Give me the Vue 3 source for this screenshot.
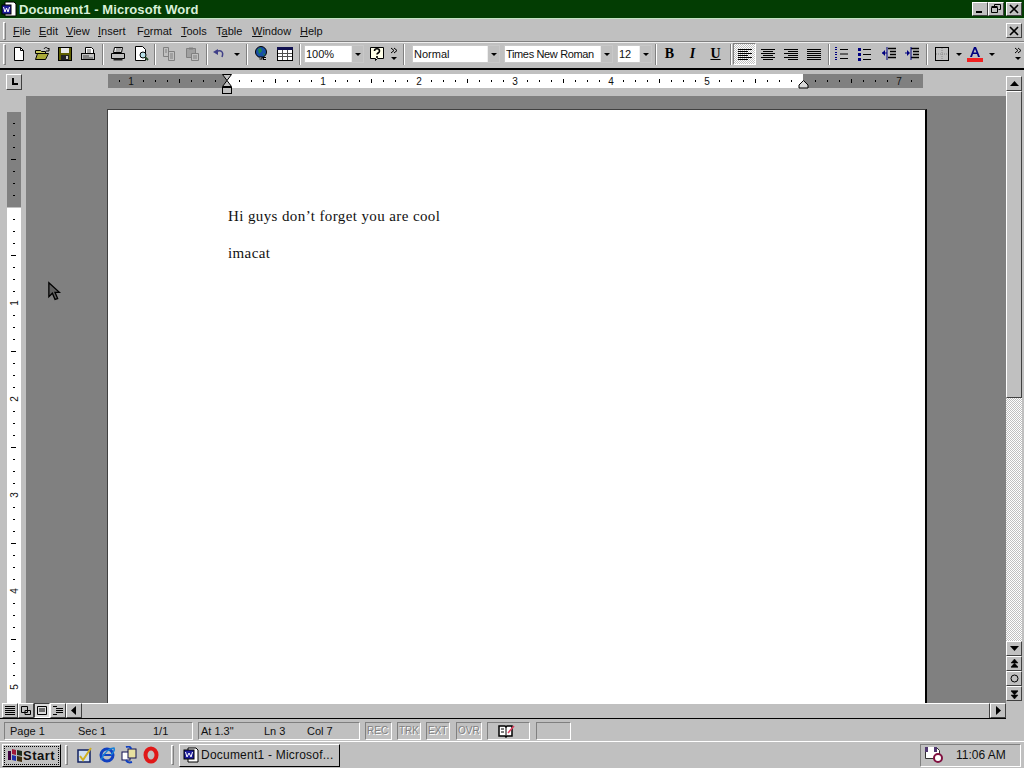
<template>
  <div class="screen">
    <!-- title bar -->
    <div class="titlebar">
      <svg class="title-icon" width="16" height="16" viewBox="0 0 16 16"><path d="M4 1h9l2 2v12H4z" fill="#fff" stroke="#000"/><rect x="1" y="4" width="9" height="9" fill="#1c1c9c" stroke="#000"/><path d="M2.500 6l1.500 5 1.500-4 1.500 4 1.500-5" fill="none" stroke="#fff"/></svg>
      <span class="title-text">Document1 - Microsoft Word</span>
      <div class="win-buttons">
        <button class="win-btn"><svg width="10" height="10"><rect x="1" y="7" width="6" height="2" fill="#000"/></svg></button>
        <button class="win-btn"><svg width="10" height="10" fill="none" stroke="#000"><path d="M3.500 2.500V.5h6v5H7.500M.5 3.500h6v5h-6zM.5 2.500h6"/></svg></button>
        <button class="win-btn gap"><svg width="10" height="10" stroke="#000" stroke-width="1.6"><path d="M1 1l8 8M9 1L1 9"/></svg></button>
      </div>
    </div>

    <!-- menu -->
    <div class="menubar">
      <span class="grip"></span>
      <nav class="menu">
        <span v-for="m in menus" :key="m.label" :style="{ width: m.w + 'px' }">{{ m.before }}<u>{{ m.key }}</u>{{ m.after }}</span>
      </nav>
      <button class="win-btn doc-close"><svg width="10" height="10" stroke="#000" stroke-width="1.6"><path d="M1 1l8 8M9 1L1 9"/></svg></button>
    </div>

    <!-- toolbar -->
    <div class="toolbar">
      <span class="grip small"></span>
      <div class="btn"><svg viewBox="0 0 16 16"><path d="M3.500 1.500h6l3 3v10h-9z" fill="#fff" stroke="#000"/><path d="M9.500 1.500v3h3" fill="none" stroke="#000"/></svg></div>
      <div class="btn"><svg viewBox="0 0 16 16"><path d="M1.500 4.500h5l1 1h4v2h-10z" fill="#c8c860" stroke="#000"/><path d="M1.500 13.500l2-6h11l-3 6z" fill="#a8a838" stroke="#000"/><path d="M10 3c1-2 3-2 4 0l1-1v3h-3" fill="none" stroke="#000"/></svg></div>
      <div class="btn"><svg viewBox="0 0 16 16"><rect x="1.500" y="1.500" width="13" height="13" fill="#606000" stroke="#000"/><rect x="4" y="2" width="8" height="5" fill="#e8e8e8"/><rect x="4" y="9" width="8" height="5" fill="#222"/><rect x="9" y="10" width="2" height="3" fill="#ccc"/></svg></div>
      <div class="btn"><svg viewBox="0 0 16 16"><path d="M5.500 1.500h6l2 2v6h-8z" fill="#fff" stroke="#000"/><rect x="1.500" y="7.500" width="13" height="6" fill="#c0c0c0" stroke="#000"/><path d="M3 10h6M3 12h10" stroke="#444"/><path d="M7 4h4M7 6h4" stroke="#555"/></svg></div>
      <span class="sep"></span>
      <div class="btn"><svg viewBox="0 0 16 16"><path d="M4.500 1.500h8l-1 5h-8z" fill="#fff" stroke="#000"/><path d="M1.500 7.500h13v5h-13z" fill="#c0c0c0" stroke="#000"/><path d="M3.500 12.500h9v2h-9z" fill="#222"/><path d="M6 3h5M5.500 5h5" stroke="#555"/></svg></div>
      <div class="btn"><svg viewBox="0 0 16 16"><path d="M2.500.5h7l3 3v11h-10z" fill="#fff" stroke="#000"/><circle cx="10" cy="9" r="3" fill="#b8e0e8" stroke="#000"/><path d="M12 11l3 3" stroke="#284828" stroke-width="2"/></svg></div>
      <span class="sep narrow"></span>
      <div class="btn off"><svg viewBox="0 0 16 16" fill="none" stroke="#808080"><path d="M2.500 1.500h5v9h-5zM7.500 5.500h6v9h-6z"/><path d="M4 4h2M4 6h2M9 8h3M9 10h3M9 12h3" /></svg></div>
      <div class="btn off"><svg viewBox="0 0 16 16"><path d="M2.500 2.500h9v9h-9z" fill="#a0a0a0" stroke="#808080"/><path d="M7.500 7.500h7v7h-7z" fill="#c0c0c0" stroke="#808080"/><path d="M5 1.500h4v2H5z" fill="#808080"/><path d="M9 10h4M9 12h4" stroke="#808080"/></svg></div>
      <span class="sep sixth"></span>
      <div class="btn undo"><svg viewBox="0 0 16 16" fill="none"><path d="M4 6c5-3 8 0 6 5" stroke="#404088" stroke-width="1.500"/><path d="M1 6l5-3v6z" fill="#404088"/></svg></div>
      <div class="drop"></div>
      <span class="sep"></span>
      <div class="btn"><svg viewBox="0 0 16 16"><circle cx="7" cy="6" r="5.500" fill="#1850a8" stroke="#000"/><path d="M4 3l3-1 1 3-3 3zM9 7l2 1-1 2z" fill="#208848"/><path d="M5.500 12h3M9 12.500h3" stroke="#000" stroke-width="3"/><path d="M5.500 12h2M10 12.500h2" stroke="#d8d8d8"/></svg></div>
      <div class="btn"><svg viewBox="0 0 16 16"><rect x=".5" y="1.500" width="15" height="13" fill="#fff" stroke="#000"/><rect x="0" y="1" width="16" height="3" fill="#101050"/><path d="M1 7.500h14M1 10.500h14M5.500 4v10M10.500 4v10" stroke="#505050"/></svg></div>
      <span class="sep"></span>
      <div class="combo" style="width:60px"><span>100%</span><i></i></div>
      <div class="btn help"><svg viewBox="0 0 16 16"><path d="M1.500 1.500h13v11h-6l-2 2v-2h-5z" fill="#ffffe8" stroke="#000"/><path d="M5.500 5c0-3 5-3 5 0 0 2-2.500 2-2.500 3.500M8 10v2" fill="none" stroke="#000" stroke-width="1.600"/></svg></div>
      <div class="more"><svg width="9" height="14" viewBox="0 0 9 14" fill="none" stroke="#000"><path d="M1 1l3 2.500-3 2.500M4 1l3 2.500-3 2.500"/><path d="M1 10h6l-3 3z" fill="#000" stroke="none"/></svg></div>
      <span class="sep grip-sep"></span>
      <div class="combo" style="width:88px"><span>Normal</span><i></i></div>
      <div class="combo gap" style="width:109px"><span class="tight">Times New Roman</span><i></i></div>
      <div class="combo gap" style="width:35px"><span>12</span><i></i></div>
      <span class="sep sixth"></span>
      <div class="btn glyph bold">B</div>
      <div class="btn glyph italic">I</div>
      <div class="btn glyph under">U</div>
      <span class="sep sixth"></span>
      <div class="btn pressed"><svg viewBox="0 0 16 16" stroke="#000"><path d="M1 3.500h14M1 5.500h10M1 7.500h14M1 9.500h10M1 11.500h14M1 13.500h10"/></svg></div>
      <div class="btn"><svg viewBox="0 0 16 16" stroke="#000"><path d="M1 3.500h14M3 5.500h10M1 7.500h14M3 9.500h10M1 11.500h14M3 13.500h10"/></svg></div>
      <div class="btn"><svg viewBox="0 0 16 16" stroke="#000"><path d="M1 3.500h14M5 5.500h10M1 7.500h14M5 9.500h10M1 11.500h14M5 13.500h10"/></svg></div>
      <div class="btn"><svg viewBox="0 0 16 16" stroke="#000"><path d="M1 3.500h14M1 5.500h14M1 7.500h14M1 9.500h14M1 11.500h14M1 13.500h14"/></svg></div>
      <span class="sep sixth"></span>
      <div class="btn"><svg viewBox="0 0 16 16"><path d="M0 1h2v1H0zM0 3h2v1H0zM0 6h2v1H0zM0 8h2v1H0zM0 11h2v1H0zM0 13h2v1H0z" fill="#000080"/><path d="M5 3.500h8M5 8h8M5 12.500h8" stroke="#000"/></svg></div>
      <div class="btn"><svg viewBox="0 0 16 16"><path d="M0 2h3v3H0zM0 7h3v3H0zM0 12h3v3H0z" fill="#000080"/><path d="M5 3.500h8M5 8.500h8M5 13.500h8" stroke="#000"/></svg></div>
      <div class="btn"><svg viewBox="0 0 16 16"><path d="M7 2.500h8M9 5.500h6M9 8.500h6M7 11.500h8" stroke="#000" stroke-width="1.400"/><path d="M1 7h5M6 1v13" stroke="#000080"/><path d="M1 7l3-3v6z" fill="#000080"/></svg></div>
      <div class="btn"><svg viewBox="0 0 16 16"><path d="M7 2.500h8M9 5.500h6M9 8.500h6M7 11.500h8" stroke="#000" stroke-width="1.400"/><path d="M1 7h4M7 1v13" stroke="#000080"/><path d="M6 7l-3-3v6z" fill="#000080"/></svg></div>
      <span class="sep"></span>
      <div class="btn"><svg viewBox="0 0 16 16" fill="none" stroke="#000"><rect x="1.500" y="1.500" width="13" height="13"/><path d="M8 2v12M2 8h12" stroke="#888" stroke-dasharray="1 1"/></svg></div>
      <div class="drop wide"></div>
      <div class="btn"><svg viewBox="0 0 16 16"><path d="M3 11L7 1h2l4 10h-2l-1-3H6l-1 3zM6.500 6.500h3L8 3z" fill="#000080" fill-rule="evenodd"/><rect x="0" y="12" width="16" height="4" fill="#f02020"/></svg></div>
      <div class="drop"></div>
      <div class="more end"><svg width="9" height="14" viewBox="0 0 9 14" fill="none" stroke="#000"><path d="M1 1l3 2.500-3 2.500M4 1l3 2.500-3 2.500"/><path d="M1 10h6l-3 3z" fill="#000" stroke="none"/></svg></div>
    </div>

    <!-- document area with rulers and scrollbars -->
    <div class="middle">
      <div class="left-col">
        <div class="hruler-row">
          <svg class="hruler" width="1006" height="26" viewBox="0 0 1006 26">
            <rect x="108" y="4" width="119" height="14" fill="#808080"/>
            <rect x="227" y="4" width="576" height="14" fill="#fff"/>
            <rect x="803" y="4" width="120" height="14" fill="#808080"/>
            <rect v-for="t in hTicks" :key="t.x" :x="t.x" :y="t.y" width="1" :height="t.h" fill="#000"/>
            <text v-for="n in hNums" :key="n.x" :x="n.x" y="15" class="ruler-num" text-anchor="middle">{{ n.label }}</text>
            <path d="M222.500 4.500h9l-4.500 6 4.500 6h-9l4.500-6z" fill="#c0c0c0" stroke="#000"/>
            <rect x="222.500" y="17.500" width="9" height="6" fill="#c0c0c0" stroke="#000"/>
            <path d="M803.500 10.500l4.500 4.500v3h-9v-3z" fill="#d8d8d8" stroke="#000"/>
          </svg>
          <button class="tab-btn"><svg width="10" height="10"><path d="M3 1h2v5h4v2H3z" fill="#000"/></svg></button>
        </div>
        <div class="workspace">
          <svg class="vruler" width="26" height="607" viewBox="0 0 26 607">
            <rect x="7" y="16" width="14" height="95" fill="#808080"/>
            <rect x="7" y="112" width="14" height="495" fill="#fff"/>
            <rect v-for="t in vTicks" :key="t.y" :x="t.x" :y="t.y" :width="t.w" height="1" fill="#000"/>
            <text v-for="n in vNums" :key="n.y" class="ruler-num" text-anchor="middle" :transform="`translate(18 ${n.y}) rotate(-90)`">{{ n.label }}</text>
          </svg>
          <div class="gray-desk">
            <div class="page">
              <p>Hi guys don’t forget you are cool</p>
              <p>&nbsp;</p>
              <p>imacat</p>
            </div>
          </div>
          <svg class="cursor" width="14" height="21" viewBox="0 0 16 22"><path d="M1 1v16l4-4 3 7 3-1-3-7h5z" fill="#606060" stroke="#000" stroke-width="1.500"/></svg>
        </div>
      </div>
      <div class="vscroll">
        <button class="sb-btn"><svg width="9" height="6"><path d="M4.500 0L9 5H0z" fill="#000"/></svg></button>
        <div class="sb-thumb"></div>
        <div class="sb-track"></div>
        <button class="sb-btn"><svg width="9" height="6"><path d="M0 0h9L4.500 5z" fill="#000"/></svg></button>
        <button class="sb-btn"><svg width="9" height="10"><path d="M4.500 0L8 4H1zM4.500 4L8 8H1zM1 8.500h7" fill="#000" stroke="#000" stroke-width=".5"/></svg></button>
        <button class="sb-btn"><svg width="9" height="9" fill="none" stroke="#000"><circle cx="4.500" cy="4.500" r="3.500"/></svg></button>
        <button class="sb-btn"><svg width="9" height="10"><path d="M1 1.500h7M1 2h7L4.500 6zM1 6h7L4.500 10z" fill="#000" stroke="#000" stroke-width=".5"/></svg></button>
      </div>
    </div>

    <!-- horizontal scrollbar -->
    <div class="hscroll">
      <button class="view-btn"><svg width="10" height="9" stroke="#000"><path d="M0 .5h10M0 2.500h10M0 4.500h10M0 6.500h10M0 8.500h10"/></svg></button>
      <button class="view-btn"><svg width="10" height="9" fill="none" stroke="#000"><path d="M.5.500h6v6h-6zM4 4.500h5.500v4H4z"/></svg></button>
      <button class="view-btn active"><svg width="10" height="9" fill="none" stroke="#000"><path d="M.5.500h9v8h-9zM2 3h6M2 5h6"/></svg></button>
      <button class="view-btn"><svg width="10" height="9" stroke="#000"><path d="M0 .5h4M3 2.500h7M3 4.500h7M3 6.500h7M0 8.500h4"/></svg></button>
      <button class="view-btn"><svg width="6" height="9"><path d="M5 0v9L0 4.500z" fill="#000"/></svg></button>
      <div class="hthumb"></div>
      <button class="view-btn right"><svg width="6" height="9"><path d="M1 0v9l5-4.500z" fill="#000"/></svg></button>
    </div>

    <!-- status bar -->
    <div class="statusbar">
      <div class="cell" style="width:189px"><span style="width:68px">Page 1</span><span style="width:75px">Sec 1</span><span>1/1</span></div>
      <div class="cell pos" style="width:162px;margin-left:5px"><span style="width:63px">At 1.3"</span><span style="width:43px">Ln 3</span><span>Col 7</span></div>
      <div class="cell dim" style="width:27px;margin-left:5px">REC</div>
      <div class="cell dim" style="width:24px;margin-left:5px">TRK</div>
      <div class="cell dim" style="width:24px;margin-left:5px">EXT</div>
      <div class="cell dim" style="width:26px;margin-left:6px">OVR</div>
      <div class="cell book" style="width:43px;margin-left:5px"><svg width="18" height="14" viewBox="0 0 18 14"><path d="M1 2h6l1 1 1-1h5v10H9l-1 1-1-1H1z" fill="#fff" stroke="#000" stroke-width="1.500"/><path d="M8 3v9" stroke="#000"/><path d="M3 5h3M3 8h3" stroke="#000"/><path d="M10 9l6-7" stroke="#e04060" stroke-width="1.500"/></svg></div>
      <div class="cell" style="width:35px;margin-left:6px"></div>
    </div>

    <!-- taskbar -->
    <div class="taskbar">
      <button class="start">
        <svg width="16" height="15" viewBox="0 0 16 15"><path d="M1 3h3v9H1z" fill="#400040"/><path d="M5 1l4 1v5l-4-1z" fill="#a01838"/><path d="M10 2l5 1v5l-5-1z" fill="#203020"/><path d="M5 7l4 1v5l-4-1z" fill="#2030a8"/><path d="M10 8l5 1v5l-5-1z" fill="#403010"/></svg>
        <span>Start</span>
      </button>
      <span class="grip task"></span>
      <div class="quick">
        <svg width="18" height="18" viewBox="0 0 18 18"><rect x="2" y="4" width="12" height="12" fill="#d0e0f0" stroke="#102060" stroke-width="1.500"/><path d="M4 10l3 4 8-12" fill="none" stroke="#d0b020" stroke-width="2"/></svg>
        <svg width="18" height="18" viewBox="0 0 18 18"><circle cx="9" cy="9" r="6" fill="none" stroke="#1040c0" stroke-width="3"/><path d="M5 9h9" stroke="#1040c0" stroke-width="2"/><path d="M3 14C6 6 12 2 16 2c1 2-1 5-3 7" fill="none" stroke="#1880d8" stroke-width="1.500"/></svg>
        <svg width="18" height="18" viewBox="0 0 18 18"><rect x="2" y="6" width="8" height="8" fill="#fff" stroke="#101050"/><rect x="8" y="3" width="8" height="9" fill="#e8e0a0" stroke="#101050"/><path d="M6 1c3-1 5 0 5 2M12 16c-3 1-5 0-6-2" fill="none" stroke="#1040c0" stroke-width="2"/></svg>
        <svg width="18" height="18" viewBox="0 0 18 18"><ellipse cx="9" cy="9" rx="5.500" ry="6.500" fill="none" stroke="#e01818" stroke-width="4"/></svg>
      </div>
      <span class="grip task second"></span>
      <button class="task-btn">
        <svg width="16" height="16" viewBox="0 0 16 16"><path d="M5 1h8l2 2v12H5z" fill="#fff" stroke="#000"/><rect x="1" y="3" width="10" height="9" fill="#1c1c9c" stroke="#000"/><path d="M2.500 5l1.500 5 2-4 2 4 1.500-5" fill="none" stroke="#fff"/></svg>
        <span>Document1 - Microsof...</span>
      </button>
      <div class="tray">
        <svg width="20" height="18" viewBox="0 0 20 18"><path d="M1.500 1.500h11l3 3v8h-14z" fill="#fff" stroke="#303030"/><path d="M1 1h12v5H1z" fill="#503870"/><rect x="4" y="1" width="6" height="5" fill="#fff"/><circle cx="14" cy="12" r="4" fill="#fff" stroke="#801040" stroke-width="2"/></svg>
        <span class="clock">11:06 AM</span>
      </div>
    </div>
  </div>
</template>

<script setup>
const menus = [
  { label: 'File', before: '', key: 'F', after: 'ile', w: 26 },
  { label: 'Edit', before: '', key: 'E', after: 'dit', w: 27 },
  { label: 'View', before: '', key: 'V', after: 'iew', w: 32 },
  { label: 'Insert', before: '', key: 'I', after: 'nsert', w: 39 },
  { label: 'Format', before: 'F', key: 'o', after: 'rmat', w: 44 },
  { label: 'Tools', before: '', key: 'T', after: 'ools', w: 35 },
  { label: 'Table', before: 'T', key: 'a', after: 'ble', w: 36 },
  { label: 'Window', before: '', key: 'W', after: 'indow', w: 48 },
  { label: 'Help', before: '', key: 'H', after: 'elp', w: 30 },
]

// horizontal ruler: 96px per inch, zero at x=227
const hTicks = []
const hNums = []
for (let i = -9; i <= 59; i++) {
  const x = 227 + i * 12
  if (x < 110 || x > 920) continue
  if (i % 8 === 0) {
    // 0 and 6 sit under the indent markers
    if (i !== 0 && i !== 48) hNums.push({ x, label: String(Math.abs(i / 8)) })
    continue
  }
  const half = i % 4 === 0
  hTicks.push({ x, y: half ? 9 : 10, h: half ? 4 : 2 })
}

// vertical ruler: zero at the end of the grey band
const vTicks = []
const vNums = []
for (let i = -8; i <= 40; i++) {
  const y = 111 + i * 12
  if (y < 16 || y > 600) continue
  if (i % 8 === 0) {
    if (i !== 0) vNums.push({ y, label: String(Math.abs(i / 8)) })
    continue
  }
  const half = i % 4 === 0
  vTicks.push({ x: half ? 11 : 13, y, w: half ? 5 : 2 })
}
</script>

<style>
html, body {
  margin: 0;
  background: #c0c0c0;
}
</style>

<style scoped>
.screen {
  width: 1024px;
  height: 768px;
  overflow: hidden;
  display: flex;
  flex-direction: column;
  background: #c0c0c0;
  color: #101010;
  font-family: "Liberation Sans", Arial, sans-serif;
  font-size: 11px;
  position: relative;
}

button {
  padding: 0;
  margin: 0;
  font: inherit;
  color: inherit;
}

.titlebar {
  height: 18px;
  background: #033d03;
  border-bottom: 1px solid #c4e4c4;
  display: flex;
  align-items: center;
  flex: none;
}

.title-icon {
  margin-left: 1px;
  flex: none;
}

.title-text {
  margin-left: 2px;
  color: #d8f0d8;
  font-weight: 700;
  font-size: 13px;
  letter-spacing: 0.08px;
}

.win-buttons {
  margin-left: auto;
  margin-right: 2px;
  display: flex;
}

.win-btn {
  width: 16px;
  height: 14px;
  background: #c0c0c0;
  border: 1px solid;
  border-color: #fff #404040 #404040 #fff;
  display: flex;
  align-items: center;
  justify-content: center;
  box-sizing: border-box;
}

.win-btn.gap {
  margin-left: 2px;
}

.menubar {
  height: 21px;
  padding-top: 1px;
  border-bottom: 1px solid #808080;
  display: flex;
  align-items: center;
  flex: none;
  box-sizing: content-box;
}

.grip {
  width: 3px;
  height: 18px;
  margin-left: 3px;
  flex: none;
  box-sizing: border-box;
  border: 1px solid;
  border-color: #fff #808080 #808080 #fff;
}

.menu {
  display: flex;
  margin-left: 7px;
  font-size: 11px;
}

.menu span {
  display: block;
  white-space: nowrap;
}

.doc-close {
  margin-left: auto;
  margin-right: 2px;
  height: 15px;
}

.toolbar {
  height: 26px;
  display: flex;
  align-items: center;
  flex: none;
  border-top: 1px solid #eee;
  padding-bottom: 3px;
  box-sizing: border-box;
}

.grip.small {
  height: 21px;
  margin-left: 3px;
  margin-right: 1px;
}

.btn {
  width: 23px;
  height: 22px;
  display: flex;
  align-items: center;
  justify-content: center;
  flex: none;
  box-sizing: border-box;
}

.btn svg {
  width: 16px;
  height: 16px;
}

.btn.undo {
  width: 22px;
}

.btn.help {
  margin-left: 1px;
}

.btn.pressed {
  border: 1px solid;
  border-color: #808080 #fff #fff #808080;
  background: repeating-conic-gradient(#fff 0 25%, #c0c0c0 0 50%) 0 0 / 2px 2px;
}

.glyph {
  font-family: "Liberation Serif", serif;
  font-size: 14px;
  font-weight: 700;
  color: #000;
}

.glyph.italic {
  font-style: italic;
}

.glyph.under {
  text-decoration: underline;
}

.sep {
  width: 7px;
  height: 21px;
  flex: none;
  position: relative;
}

.sep::after {
  content: "";
  position: absolute;
  left: 3px;
  top: 0;
  bottom: 0;
  width: 1px;
  background: #808080;
  box-shadow: 1px 0 0 #fff;
}

.sep.narrow {
  width: 5px;
}

.sep.narrow::after {
  left: 2px;
}

.sep.sixth {
  width: 6px;
}

.sep.grip-sep {
  width: 11px;
}

.drop {
  width: 12px;
  height: 22px;
  flex: none;
  position: relative;
}

.drop::after {
  content: "";
  position: absolute;
  left: 3px;
  top: 10px;
  border: 3px solid transparent;
  border-top-color: #000;
  border-bottom: none;
}

.drop.wide {
  width: 10px;
}

.combo {
  height: 18px;
  background: #fff;
  display: flex;
  align-items: center;
  flex: none;
  box-sizing: border-box;
  padding-left: 1px;
  border: 1px solid #c8c8c8;
  margin-left: 1px;
}

.combo.gap {
  margin-left: 4px;
}

.combo span {
  flex: 1;
  white-space: nowrap;
  font-size: 11px;
}

.combo span.tight {
  letter-spacing: -0.35px;
}

.combo i {
  display: block;
  width: 11px;
  height: 16px;
  background: #c0c0c0;
  border-left: 1px solid #eee;
  position: relative;
  flex: none;
}

.combo i::after {
  content: "";
  position: absolute;
  left: 3px;
  top: 7px;
  border: 3px solid transparent;
  border-top-color: #000;
  border-bottom: none;
}

.more {
  width: 12px;
  height: 22px;
  display: flex;
  align-items: center;
  justify-content: center;
  flex: none;
}

.more.end {
  margin-left: auto;
}

.middle {
  height: 635px;
  display: flex;
  flex: none;
  border-top: 2px solid #000;
  box-sizing: border-box;
  background: #c0c0c0;
}

.left-col {
  width: 1006px;
  display: flex;
  flex-direction: column;
  flex: none;
}

.hruler-row {
  height: 26px;
  flex: none;
  position: relative;
}

.hruler {
  display: block;
}

.tab-btn {
  position: absolute;
  left: 6px;
  top: 4px;
  width: 16px;
  height: 16px;
  background: #c0c0c0;
  border: 1px solid;
  border-color: #fff #404040 #404040 #fff;
  display: flex;
  align-items: center;
  justify-content: center;
  box-sizing: border-box;
}

.ruler-num {
  font-size: 10px;
  font-family: "Liberation Sans", Arial, sans-serif;
  fill: #101010;
}

.workspace {
  height: 607px;
  display: flex;
  position: relative;
}

.vruler {
  display: block;
  flex: none;
}

.gray-desk {
  flex: 1;
  background: #808080;
  padding: 13px 0 0 81px;
  overflow: hidden;
  box-sizing: border-box;
}

.page {
  width: 820px;
  height: 700px;
  background: #fff;
  box-sizing: border-box;
  border-right: 2px solid #000;
  border-top: 1px solid #404040;
  border-left: 1px solid #404040;
  padding: 97px 0 0 120px;
  font-family: "Liberation Serif", "Times New Roman", serif;
  font-size: 15px;
  line-height: 18.5px;
  letter-spacing: 0.39px;
  color: #111;
}

.page p {
  margin: 0;
}

.cursor {
  position: absolute;
  left: 48px;
  top: 185px;
}

.vscroll {
  width: 16px;
  margin-top: 6px;
  display: flex;
  flex-direction: column;
  flex: none;
  height: 625px;
}

.sb-btn {
  width: 16px;
  height: 15px;
  flex: none;
  background: #c0c0c0;
  border: 1px solid;
  border-color: #fff #404040 #404040 #fff;
  display: flex;
  align-items: center;
  justify-content: center;
  box-sizing: border-box;
}

.sb-thumb {
  height: 307px;
  flex: none;
  background: #c0c0c0;
  box-sizing: border-box;
  border: 1px solid;
  border-color: #fff #404040 #404040 #fff;
}

.sb-track {
  flex: 1;
  background: repeating-conic-gradient(#fff 0 25%, #c0c0c0 0 50%) 0 0 / 2px 2px;
}

.hscroll {
  height: 16px;
  display: flex;
  align-items: stretch;
  flex: none;
  padding-left: 2px;
  width: 1006px;
  box-sizing: border-box;
  border-bottom: 1px solid #000;
  position: relative;
}

.view-btn {
  width: 16px;
  flex: none;
  background: #c0c0c0;
  border: 1px solid;
  border-color: #fff #404040 #404040 #fff;
  display: flex;
  align-items: center;
  justify-content: center;
  box-sizing: border-box;
}

.view-btn.active {
  background: #dcdcdc;
  border-color: #404040 #fff #fff #404040;
}

.hthumb {
  flex: 1;
  border-top: 1px solid #fff;
  border-right: 1px solid #404040;
  box-sizing: border-box;
}

.statusbar {
  height: 22px;
  display: flex;
  align-items: center;
  flex: none;
  padding: 1px 0 0 4px;
  box-sizing: border-box;
}

.cell {
  height: 18px;
  box-sizing: border-box;
  flex: none;
  border: 1px solid;
  border-color: #808080 #fff #fff #808080;
  display: flex;
  align-items: center;
  padding-left: 5px;
  white-space: nowrap;
  font-size: 11px;
}

.cell.pos {
  padding-left: 2px;
}

.cell span {
  display: block;
  flex: none;
}

.cell.dim {
  color: #808080;
  text-shadow: 1px 1px 0 #fff;
  padding-left: 1px;
  font-size: 10px;
}

.cell.book {
  padding-left: 10px;
}

.taskbar {
  height: 27px;
  flex: none;
  border-top: 1px solid #fff;
  box-sizing: border-box;
  display: flex;
  align-items: center;
}

.start {
  width: 59px;
  height: 23px;
  margin-left: 2px;
  background: #c0c0c0;
  border: 1px solid;
  border-color: #fff #000 #000 #fff;
  outline: 1px dotted #000;
  outline-offset: -3px;
  display: flex;
  align-items: center;
  padding-left: 4px;
  box-sizing: border-box;
  font-size: 13px;
  font-weight: 700;
  letter-spacing: 0.5px;
  flex: none;
}

.grip.task {
  height: 20px;
  margin-left: 4px;
}

.quick {
  display: flex;
  align-items: center;
  gap: 4px;
  margin-left: 8px;
  width: 92px;
}

.grip.task.second {
  margin-left: 3px;
}

.task-btn {
  width: 161px;
  height: 23px;
  margin-left: 5px;
  background: #c0c0c0;
  border: 1px solid;
  border-color: #fff #000 #000 #fff;
  display: flex;
  align-items: center;
  gap: 2px;
  padding-left: 3px;
  box-sizing: border-box;
  font-size: 12px;
  letter-spacing: 0.22px;
  white-space: nowrap;
  flex: none;
}

.tray {
  margin-left: auto;
  margin-right: 3px;
  width: 101px;
  height: 23px;
  box-sizing: border-box;
  border: 1px solid;
  border-color: #808080 #fff #fff #808080;
  display: flex;
  align-items: center;
  padding-left: 3px;
  flex: none;
}

.clock {
  margin-left: 12px;
  font-size: 12px;
}
</style>
